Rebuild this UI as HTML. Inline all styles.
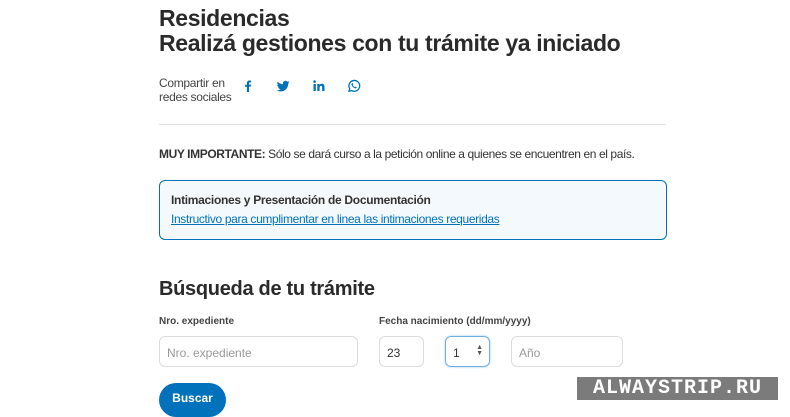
<!DOCTYPE html>
<html><head><meta charset="utf-8"><style>
*{box-sizing:border-box;margin:0;padding:0}
body{width:790px;height:410px;overflow:hidden;background:#fff;font-family:"Liberation Sans",sans-serif;color:#333;position:relative}
.a{position:absolute}
h1{position:absolute;left:159px;top:6px;font-size:23px;line-height:25px;font-weight:bold;color:#2a2a2a;letter-spacing:-0.35px}
.share{left:159px;top:76px;font-size:12px;line-height:14px;color:#444;letter-spacing:-0.3px}
.ic{position:absolute;top:78px;width:16px;height:16px}
.hr{left:159px;top:124px;width:507px;height:1px;background:#e3e3e3}
.imp{left:159px;top:147px;font-size:12px;color:#333;letter-spacing:-0.4px}
.box{left:159px;top:180px;width:508px;height:60px;border:1.5px solid #0072bb;border-radius:6px;background:#f4f9fd;padding:12px 11px}
.box b{display:block;font-size:12px;color:#333;margin-bottom:3px;letter-spacing:-0.3px}
.box a{font-size:12px;color:#0072bb;text-decoration:underline;letter-spacing:-0.35px}
h2{position:absolute;left:159px;top:278px;font-size:20px;font-weight:bold;color:#2a2a2a;letter-spacing:-0.3px}
.lbl{top:316px;font-size:10px;font-weight:bold;color:#444}
.in{position:absolute;top:336px;height:31px;border:1px solid #ddd;border-radius:6px;font-size:12px;padding:9px 7px;color:#333}
.ph{color:#999}
.btn{left:159px;top:383px;width:67px;height:34px;border-radius:17px;background:#0072bb;color:#fff;font-size:12px;font-weight:bold;text-align:center;line-height:30px}
.wm{left:577px;top:377px;width:201px;height:23px;background:#7b7b7b;color:#fff;font-family:"Liberation Mono",monospace;font-weight:bold;font-size:20px;line-height:23px;text-align:center;letter-spacing:1px}
</style></head><body>
<h1>Residencias<br>Realizá gestiones con tu trámite ya iniciado</h1>
<div class="a share">Compartir en<br>redes sociales</div>
<svg class="ic" style="left:240px" viewBox="0 0 16 16"><path d="M9 14V8.6h1.8l.3-2H9V5.4c0-.6.2-1 1-1h1.1V2.6c-.2 0-.9-.1-1.6-.1-1.6 0-2.6 1-2.6 2.7v1.5H5.1v2h1.8V14z" fill="#0072bb"/></svg>
<svg class="ic" style="left:275px" viewBox="0 0 16 16"><path d="M14.5 4.2c-.5.2-1 .4-1.5.4.6-.3 1-.9 1.2-1.5-.5.3-1.1.5-1.700.7a2.6 2.6 0 0 0-4.5 2.4C5.8 6.1 3.9 5.1 2.6 3.5c-.7 1.2-.3 2.7.8 3.5-.4 0-.8-.1-1.200-.3 0 1.3.9 2.4 2.1 2.6-.4.1-.8.1-1.2 0 .3 1.1 1.3 1.8 2.5 1.8-1.1.9-2.5 1.3-3.9 1.1 1.2.8 2.6 1.2 4 1.2 4.9 0 7.6-4.1 7.5-7.8.5-.4 1-.8 1.300-1.4z" fill="#0072bb"/></svg>
<svg class="ic" style="left:311px" viewBox="0 0 16 16"><g fill="#0072bb"><rect x="2.5" y="6" width="2.3" height="7"/><circle cx="3.6" cy="3.6" r="1.3"/><path d="M6.3 6h2.2v1c.4-.7 1.2-1.2 2.4-1.2 2 0 2.6 1.3 2.6 3.2V13h-2.3V9.5c0-1-.3-1.6-1.1-1.6-.9 0-1.5.6-1.5 1.7V13H6.3z"/></g></svg>
<svg class="ic" style="left:346px" viewBox="0 0 16 16"><path d="M3 13.2l.7-2.5A5.4 5.4 0 1 1 5.7 12.6z" fill="none" stroke="#0072bb" stroke-width="1.3"/><path d="M6 5.3c.3-.3.6-.2.7 0l.5 1.1c0 .3-.4.6-.4.8.4.8 1.1 1.5 1.9 1.9.2 0 .5-.4.8-.5l1.1.5c.2.2.2.5-.1.8-.5.5-1.3.6-2.2.1-1.2-.6-2.1-1.6-2.6-2.6-.4-.9-.2-1.6.3-2.1z" fill="#0072bb"/></svg>
<div class="a hr"></div>
<div class="a imp"><b>MUY IMPORTANTE:</b> Sólo se dará curso a la petición online a quienes se encuentren en el país.</div>
<div class="a box"><b>Intimaciones y Presentación de Documentación</b><a>Instructivo para cumplimentar en linea las intimaciones requeridas</a></div>
<h2>Búsqueda de tu trámite</h2>
<div class="a lbl" style="left:159px">Nro. expediente</div>
<div class="a lbl" style="left:379px">Fecha nacimiento (dd/mm/yyyy)</div>
<div class="in ph" style="left:159px;width:199px">Nro. expediente</div>
<div class="in" style="left:379px;width:45px">23</div>
<div class="in" style="left:445px;width:45px;border-color:#6fb0e0;box-shadow:0 0 2px #9cc9ec">1<span style="position:absolute;right:6px;top:8px;font-size:7px;line-height:6px;color:#555">▲<br>▼</span></div>
<div class="in ph" style="left:511px;width:112px">Año</div>
<div class="a btn">Buscar</div>
<div class="a wm">ALWAYSTRIP.RU</div>
</body></html>
